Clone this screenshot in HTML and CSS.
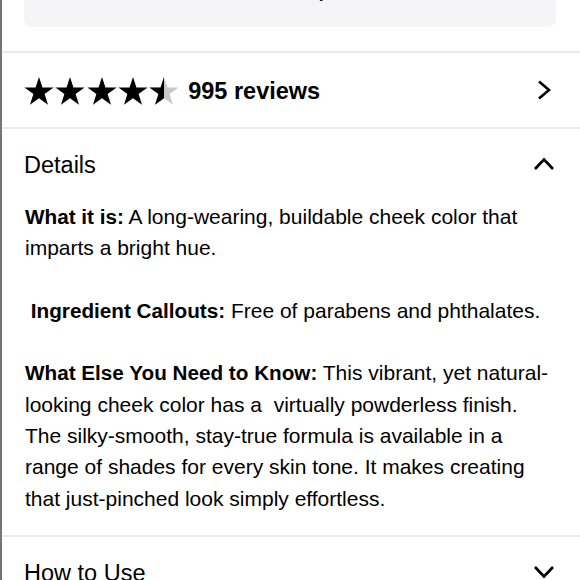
FILE: index.html
```html
<!DOCTYPE html>
<html lang="en">
<head>
<meta charset="utf-8">
<title>Product details</title>
<link rel="stylesheet" href="styles.css">
</head>
<body>
<div class="page">
  <div class="promo-wrap">
    <div class="promo"><span>Delivery</span></div>
  </div>

  <div class="rating-row">
    <div class="stars">
      <svg class="star" viewBox="0 0 24 24"><path d="M12 0.7L14.76 9.2L23.7 9.2L16.47 14.45L19.23 22.95L12 17.7L4.77 22.95L7.53 14.45L0.3 9.2L9.24 9.2Z"/></svg>
      <svg class="star" viewBox="0 0 24 24"><path d="M12 0.7L14.76 9.2L23.7 9.2L16.47 14.45L19.23 22.95L12 17.7L4.77 22.95L7.53 14.45L0.3 9.2L9.24 9.2Z"/></svg>
      <svg class="star" viewBox="0 0 24 24"><path d="M12 0.7L14.76 9.2L23.7 9.2L16.47 14.45L19.23 22.95L12 17.7L4.77 22.95L7.53 14.45L0.3 9.2L9.24 9.2Z"/></svg>
      <svg class="star" viewBox="0 0 24 24"><path d="M12 0.7L14.76 9.2L23.7 9.2L16.47 14.45L19.23 22.95L12 17.7L4.77 22.95L7.53 14.45L0.3 9.2L9.24 9.2Z"/></svg>
      <svg class="star" viewBox="0 0 24 24">
        <defs><clipPath id="halfclip"><rect x="0" y="0" width="12" height="24"/></clipPath></defs>
        <path class="star-empty" d="M12 0.7L14.76 9.2L23.7 9.2L16.47 14.45L19.23 22.95L12 17.7L4.77 22.95L7.53 14.45L0.3 9.2L9.24 9.2Z"/>
        <path clip-path="url(#halfclip)" d="M12 0.7L14.76 9.2L23.7 9.2L16.47 14.45L19.23 22.95L12 17.7L4.77 22.95L7.53 14.45L0.3 9.2L9.24 9.2Z"/>
      </svg>
    </div>
    <span class="count">995 reviews</span>
    <svg class="chev-right" viewBox="0 0 14 20"><polyline points="2,1.5 12,10 2,18.5"/></svg>
  </div>

  <section class="acc">
    <div class="acc-head">
      <span class="acc-title">Details</span>
      <svg class="chev-v" viewBox="0 0 22 14"><polyline points="2,12 11,2.5 20,12"/></svg>
    </div>
    <div class="acc-body">
      <p><b>What it is:</b> A long-wearing, buildable cheek color that imparts a bright hue.<br><br>&nbsp;<b>Ingredient Callouts:</b> Free of parabens and phthalates.<br><br><b>What Else You Need to Know:</b> This vibrant, yet natural-looking cheek color has a&nbsp; virtually powderless finish. The silky-smooth, stay-true formula is available in a range of shades for every skin tone. It makes creating that just-pinched look simply effortless.</p>
    </div>
  </section>

  <section class="acc">
    <div class="acc-head">
      <span class="acc-title">How to Use</span>
      <svg class="chev-v" viewBox="0 0 22 14"><polyline points="2,2 11,11.5 20,2"/></svg>
    </div>
  </section>
</div>
</body>
</html>
```

FILE: styles.css
```css
html, body {
  margin: 0;
  padding: 0;
  background: #fff;
  overflow: hidden;
}

body {
  font-family: "Liberation Sans", Arial, Helvetica, sans-serif;
  color: #000;
}

.page {
  border-left: 2px solid #747474;
  min-height: 100vh;
}

.promo-wrap {
  padding: 0 24px 24px 22px;
  border-bottom: 2px solid #ebebeb;
}

.promo {
  height: 50px;
  margin-top: -23px;
  box-sizing: border-box;
  padding-top: 6px;
  background: #f5f5f7;
  border-radius: 8px;
  text-align: center;
  font-size: 15px;
  line-height: 20px;
  overflow: hidden;
  padding-left: 20px;
}

.rating-row {
  height: 76px;
  box-sizing: border-box;
  display: flex;
  align-items: center;
  padding: 2px 29px 0 22px;
  border-bottom: 2px solid #ebebeb;
}

.stars {
  display: flex;
  gap: 1.3px;
  margin-top: -1px;
}

.star {
  width: 30px;
  height: 30px;
  display: block;
  fill: #000;
}

.star .star-empty {
  fill: #c9c9c9;
}

.count {
  margin-left: 9px;
  font-size: 23.5px;
  font-weight: bold;
}

.chev-right {
  margin-left: auto;
  margin-top: -2px;
  width: 14px;
  height: 20px;
  fill: none;
  stroke: #000;
  stroke-width: 2.6;
}

.acc {
  border-bottom: 2px solid #ebebeb;
}

.acc-head {
  height: 70px;
  box-sizing: border-box;
  display: flex;
  align-items: center;
  justify-content: space-between;
  padding: 3px 25px 0 22px;
}

.acc-title {
  font-size: 23.5px;
}

.chev-v {
  width: 22px;
  height: 14px;
  margin-top: -3px;
  fill: none;
  stroke: #000;
  stroke-width: 2.6;
}

.acc-body {
  padding: 2px 23px 21px 23px;
}

.acc-body p {
  margin: 0;
  font-size: 21px;
  line-height: 31.3px;
}

.acc-body b {
  font-size: 20.7px;
}
```
